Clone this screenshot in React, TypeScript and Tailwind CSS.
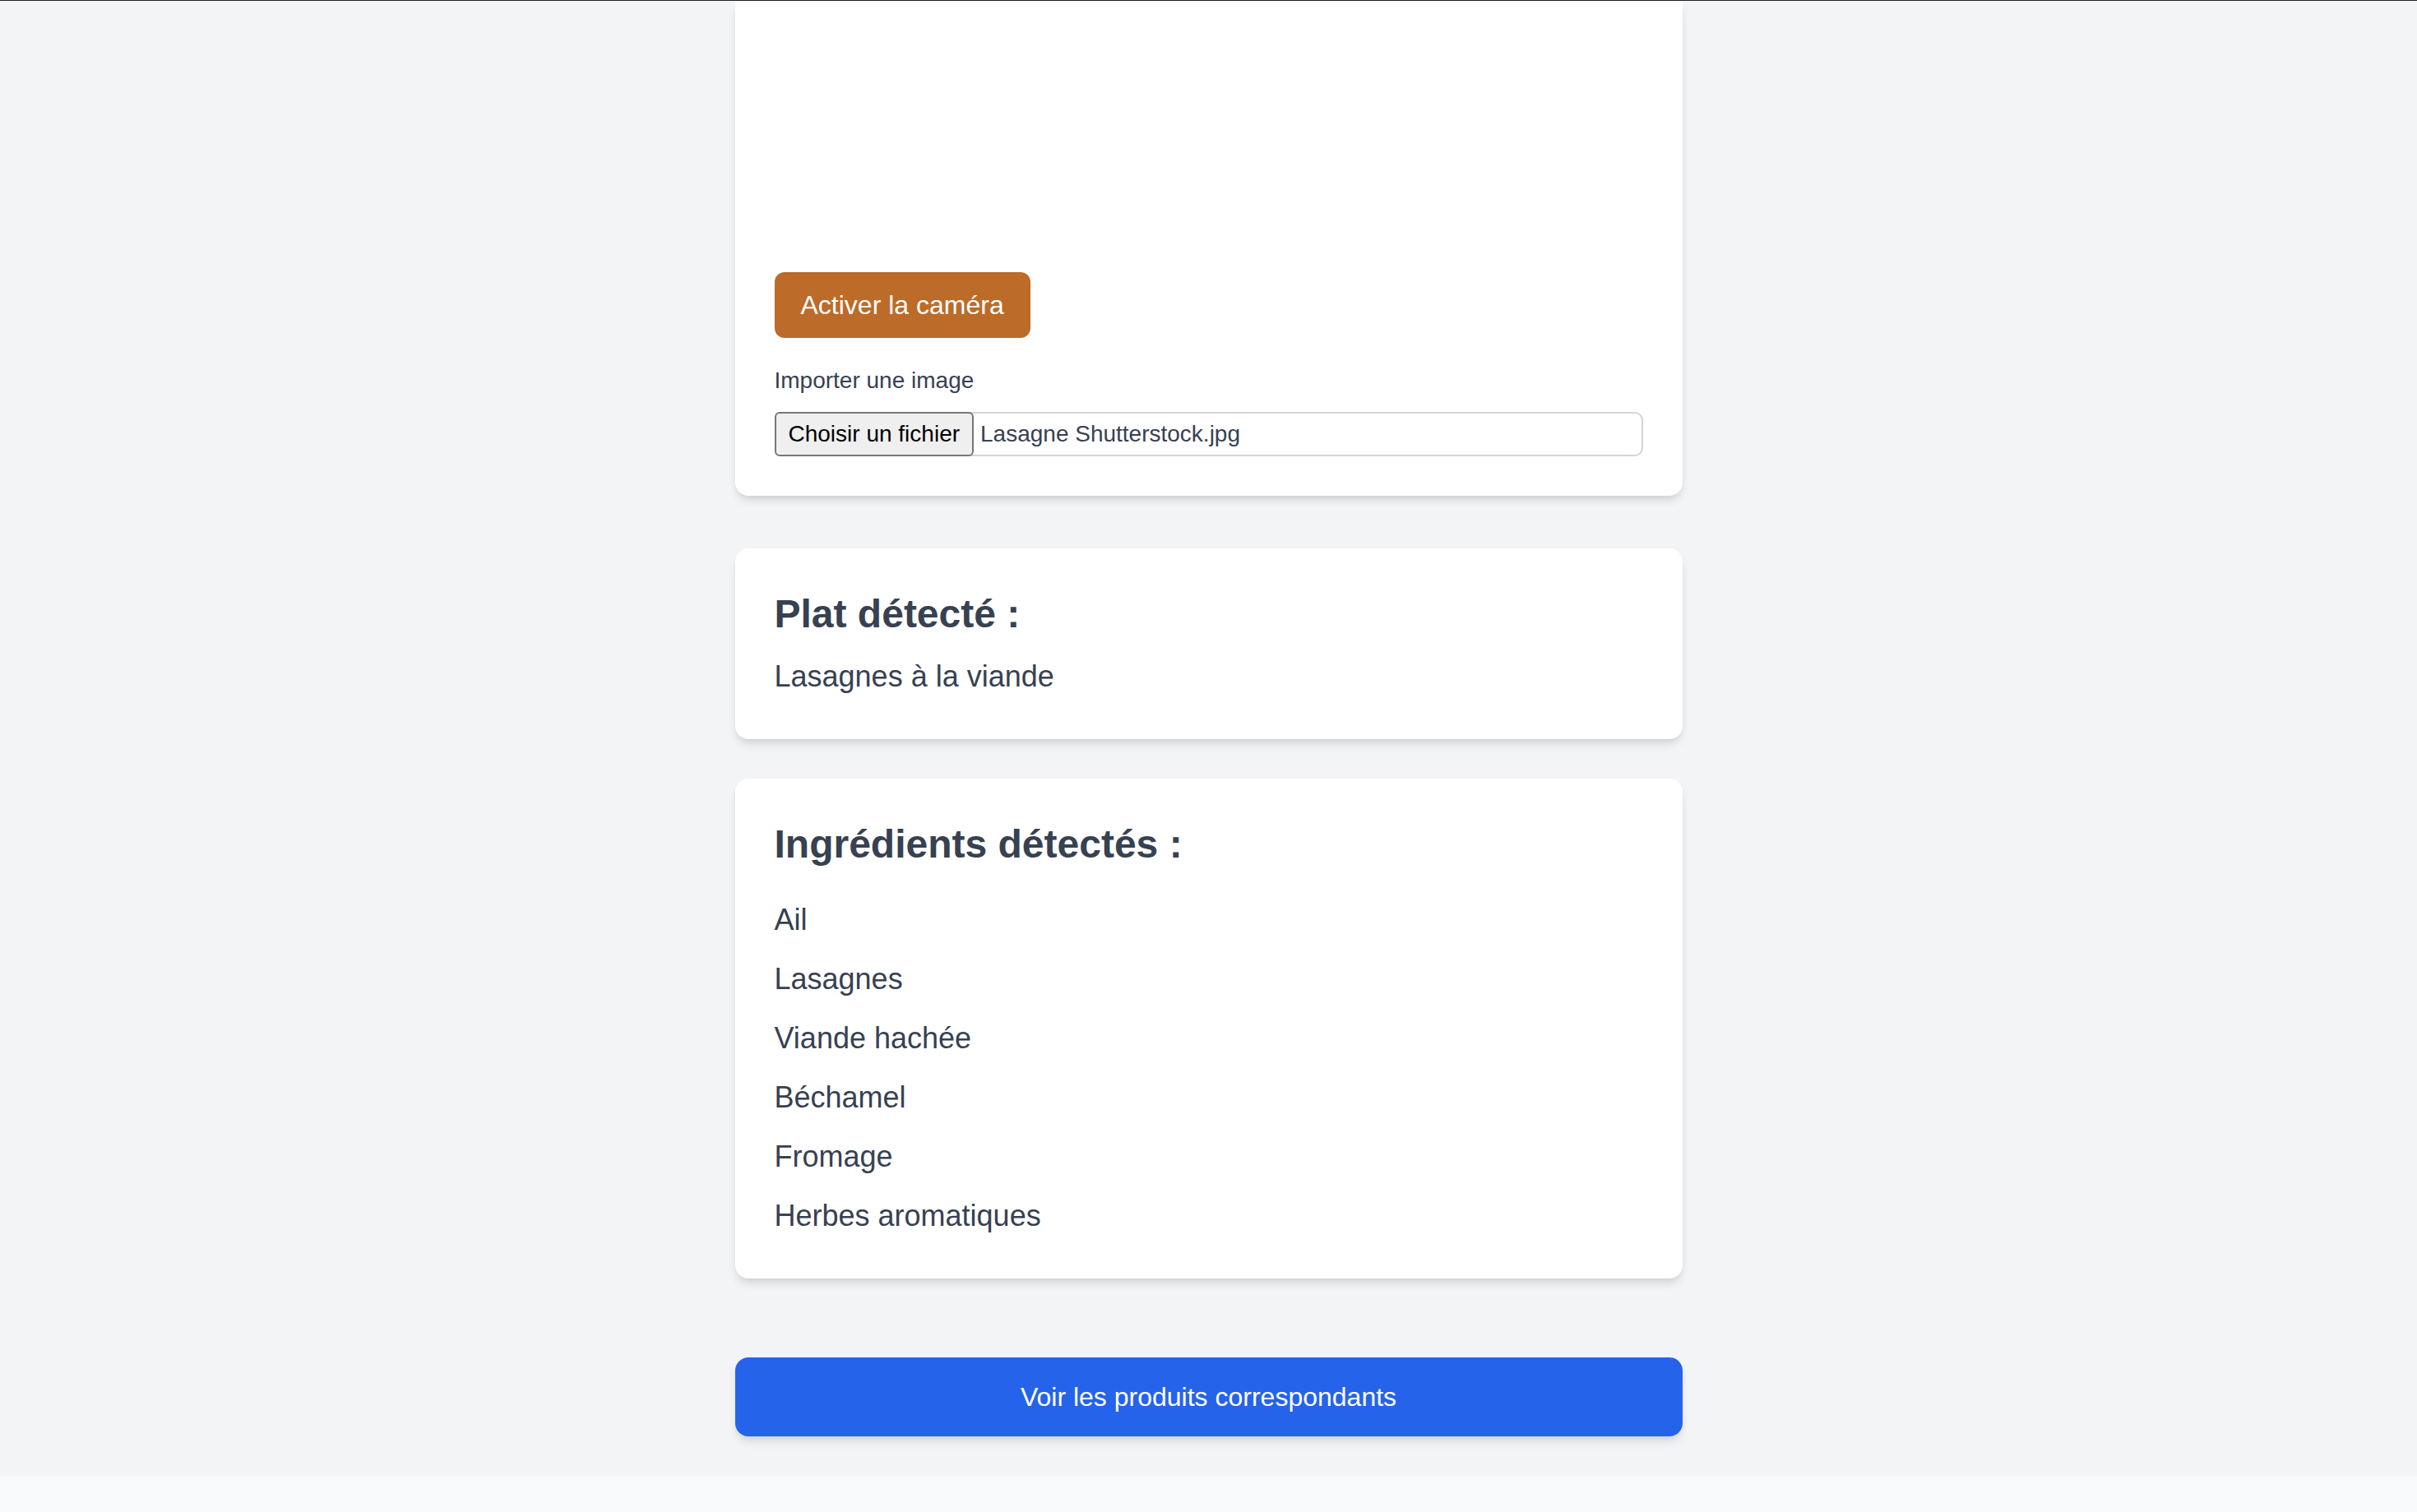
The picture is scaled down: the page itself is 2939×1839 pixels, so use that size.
import React from 'react'

const INGREDIENTS = ['Ail', 'Lasagnes', 'Viande hachée', 'Béchamel', 'Fromage', 'Herbes aromatiques']

const cardClass =
  'bg-white rounded-2xl px-[48px] shadow-[0_8px_12px_-2px_rgba(0,0,0,0.1),0_4px_8px_-4px_rgba(0,0,0,0.1)]'

export default function App() {
  return (
    <div className="min-h-screen bg-[#f9fafb] font-['Liberation_Sans',Arial,sans-serif] text-[#374151]">
      <div className="h-px bg-[#1f1f1f]" />

      <main className="bg-[#f3f4f6] pb-[48px]">
        <div className="mx-auto w-[1152px]">
          {/* Caméra / import */}
          <section className={`${cardClass} rounded-t-none pb-[48px]`}>
            <div className="h-[298px] bg-white" />
            <button
              type="button"
              className="mt-[32px] h-[80px] rounded-[12px] bg-[#bc6b29] px-[32px] text-[32px] leading-[48px] text-white"
            >
              Activer la caméra
            </button>
            <label className="mt-[32px] block text-[28px] leading-[40px] text-[#374151]">
              Importer une image
            </label>
            <div className="mt-[18px] flex h-[54px] items-stretch rounded-[10px] border-2 border-[#d1d5db]">
              <span className="-my-[2px] -ml-[2px] flex items-center rounded-[6px] border-2 border-[#767676] bg-[#efefef] px-[15px] text-[28px] text-black">
                Choisir un fichier
              </span>
              <span className="ml-[8px] flex items-center text-[28px] text-[#374151]">
                Lasagne Shutterstock.jpg
              </span>
            </div>
          </section>

          {/* Plat détecté */}
          <section className={`${cardClass} mt-[64px] py-[48px]`}>
            <h2 className="mb-[16px] text-[48px] font-bold leading-[64px] text-[#374151]">Plat détecté :</h2>
            <p className="text-[36px] leading-[56px] text-[#374151]">Lasagnes à la viande</p>
          </section>

          {/* Ingrédients */}
          <section className={`${cardClass} mt-[48px] py-[48px]`}>
            <h2 className="mb-[32px] text-[48px] font-bold leading-[64px] text-[#374151]">
              Ingrédients détectés :
            </h2>
            <ul className="flex flex-col gap-[16px]">
              {INGREDIENTS.map((item) => (
                <li key={item} className="text-[36px] leading-[56px] text-[#374151]">
                  {item}
                </li>
              ))}
            </ul>
          </section>

          <button
            type="button"
            className="mt-[96px] h-[96px] w-full rounded-2xl bg-[#2563eb] text-[32px] leading-[48px] text-white shadow-[0_8px_12px_-2px_rgba(0,0,0,0.1),0_4px_8px_-4px_rgba(0,0,0,0.1)]"
          >
            Voir les produits correspondants
          </button>
        </div>
      </main>
    </div>
  )
}
